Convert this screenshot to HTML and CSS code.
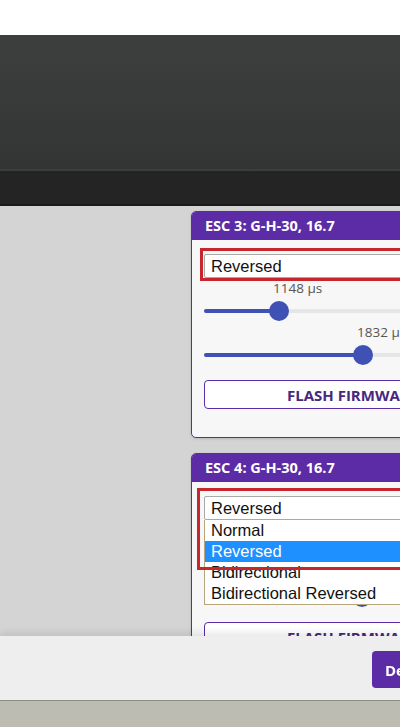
FILE: index.html
```html
<!DOCTYPE html>
<html lang="en">
<head>
    <meta charset="UTF-8">
    <title>ESC Configurator</title>
    <meta name="viewport" content="width=device-width, initial-scale=1">
    <link rel="stylesheet" href="styles.css">
</head>
<body>
    <div class="topbar"></div>
    <header class="header"></header>
    <nav class="tabs"></nav>
    <main class="content">
        <section class="esc">
            <div class="esc-title">ESC 3: G-H-30, 16.7</div>
            <div class="esc-body">
                <div class="select-wrap mark-small">
                    <div class="select">Reversed</div>
                </div>
                <div class="range" style="--pos: 75px">
                    <div class="range-label">1148 μs</div>
                    <div class="slider"><div class="fill"></div><div class="thumb"></div></div>
                </div>
                <div class="range" style="--pos: 159px">
                    <div class="range-label">1832 μs</div>
                    <div class="slider"><div class="fill"></div><div class="thumb"></div></div>
                </div>
                <button class="flash">FLASH FIRMWARE</button>
            </div>
        </section>
        <section class="esc">
            <div class="esc-title">ESC 4: G-H-30, 16.7</div>
            <div class="esc-body">
                <div class="select-wrap mark-large">
                    <div class="select">Reversed</div>
                    <ul class="listbox">
                        <li>Normal</li>
                        <li class="active">Reversed</li>
                        <li>Bidirectional</li>
                        <li>Bidirectional Reversed</li>
                    </ul>
                </div>
                <div class="range" style="--pos: 75px">
                    <div class="range-label">1148 μs</div>
                    <div class="slider"><div class="fill"></div><div class="thumb"></div></div>
                </div>
                <div class="range" style="--pos: 158px">
                    <div class="range-label">1832 μs</div>
                    <div class="slider"><div class="fill"></div><div class="thumb"></div></div>
                </div>
                <button class="flash">FLASH FIRMWARE</button>
            </div>
        </section>
    </main>
    <div class="bottom">
        <div class="toolbar">
            <button class="btn-primary">Defaults</button>
        </div>
        <div class="statusbar"></div>
    </div>
</body>
</html>
```

FILE: styles.css
```css
html, body {
    margin: 0;
    padding: 0;
    height: 100%;
    overflow: hidden;
}
body {
    font-family: "Open Sans", "Liberation Sans", Arial, sans-serif;
    background: #d4d4d4;
    color: #333;
}
.topbar {
    height: 35px;
    background: #fff;
}
.header {
    height: 134px;
    background: linear-gradient(#3d3f3e, #333534);
    border-bottom: 2px solid #3b3c3b;
}
.tabs {
    height: 33px;
    background: #242424;
    border-bottom: 2px solid #1b1b1b;
}
.content {
    display: flex;
    flex-direction: column;
    gap: 15px;
    padding: 5px 0 0 191px;
}
.esc {
    width: 321px;
    flex: none;
    background: #f7f7f7;
    border: 1px solid #5b2ca6;
    border-radius: 5px;
    box-shadow: 0 1px 3px #00000022;
}
.esc-title {
    height: 28px;
    line-height: 28px;
    padding-left: 13px;
    background: #5b2ca6;
    border-radius: 4px 4px 0 0;
    color: #fff;
    font-size: 14.5px;
    font-weight: 700;
}
.esc-body {
    padding: 14px 12px 28px 12px;
}
.select-wrap {
    position: relative;
}
.select-wrap::after {
    content: "";
    position: absolute;
    border: 3px solid #c8262d;
    pointer-events: none;
    z-index: 3;
}
.mark-small::after {
    top: -6px;
    left: -4px;
    right: -4px;
    height: 27px;
}
.mark-large::after {
    top: -8px;
    left: -7px;
    right: -7px;
    height: 76px;
}
.select {
    height: 22px;
    line-height: 22px;
    padding-left: 6px;
    background: #fff;
    border: 1px solid #a9a9a9;
    border-radius: 2px;
    font-family: "Liberation Sans", Arial, sans-serif;
    font-size: 16.5px;
    color: #111;
}
.listbox {
    position: absolute;
    top: 100%;
    left: 0;
    right: 0;
    margin: 0;
    padding: 0;
    list-style: none;
    background: #fff;
    border: 1px solid #b8a57c;
    border-top: none;
    font-family: "Liberation Sans", Arial, sans-serif;
    font-size: 16.5px;
    color: #111;
    z-index: 2;
}
.listbox li {
    height: 21px;
    line-height: 21px;
    padding-left: 6px;
}
.listbox li.active {
    background: #1e90ff;
    color: #fff;
}
.range {
    margin-top: 1px;
}
.range-label {
    height: 18px;
    line-height: 18px;
    padding-left: calc(var(--pos) - 6px);
    font-size: 13.5px;
    color: #555;
    white-space: nowrap;
}
.slider {
    position: relative;
    height: 22px;
    margin-top: 3px;
}
.slider::before {
    content: "";
    position: absolute;
    left: 0;
    right: 0;
    top: 9px;
    height: 4px;
    border-radius: 2px;
    background: #e6e6e6;
}
.fill {
    position: absolute;
    left: 0;
    top: 9px;
    height: 4px;
    width: var(--pos);
    border-radius: 2px;
    background: #3f51b5;
}
.thumb {
    position: absolute;
    top: 1px;
    left: calc(var(--pos) - 10px);
    width: 20px;
    height: 20px;
    border-radius: 50%;
    background: #3f51b5;
}
.flash {
    display: block;
    width: 100%;
    height: 29px;
    margin-top: 14px;
    background: #fff;
    border: 1px solid #5b2ca6;
    border-radius: 4px;
    color: #47287f;
    font-family: "Open Sans", "Liberation Sans", Arial, sans-serif;
    font-size: 15px;
    font-weight: 700;
}
.bottom {
    position: fixed;
    left: 0;
    right: 0;
    bottom: 0;
    z-index: 10;
}
.toolbar {
    display: flex;
    height: 64px;
    box-sizing: border-box;
    padding: 15px 0 0 372px;
    background: #eeeeee;
    box-shadow: 0 -3px 8px #0000001a;
}
.btn-primary {
    flex: none;
    height: 37px;
    padding: 0 13px;
    background: #5b2ca6;
    border: none;
    border-radius: 4px;
    color: #fff;
    font-family: "Open Sans", "Liberation Sans", Arial, sans-serif;
    font-size: 15px;
    font-weight: 700;
    white-space: nowrap;
}
.statusbar {
    height: 26px;
    background: #bdbcb3;
    border-top: 1px solid #8d8d88;
}
```
